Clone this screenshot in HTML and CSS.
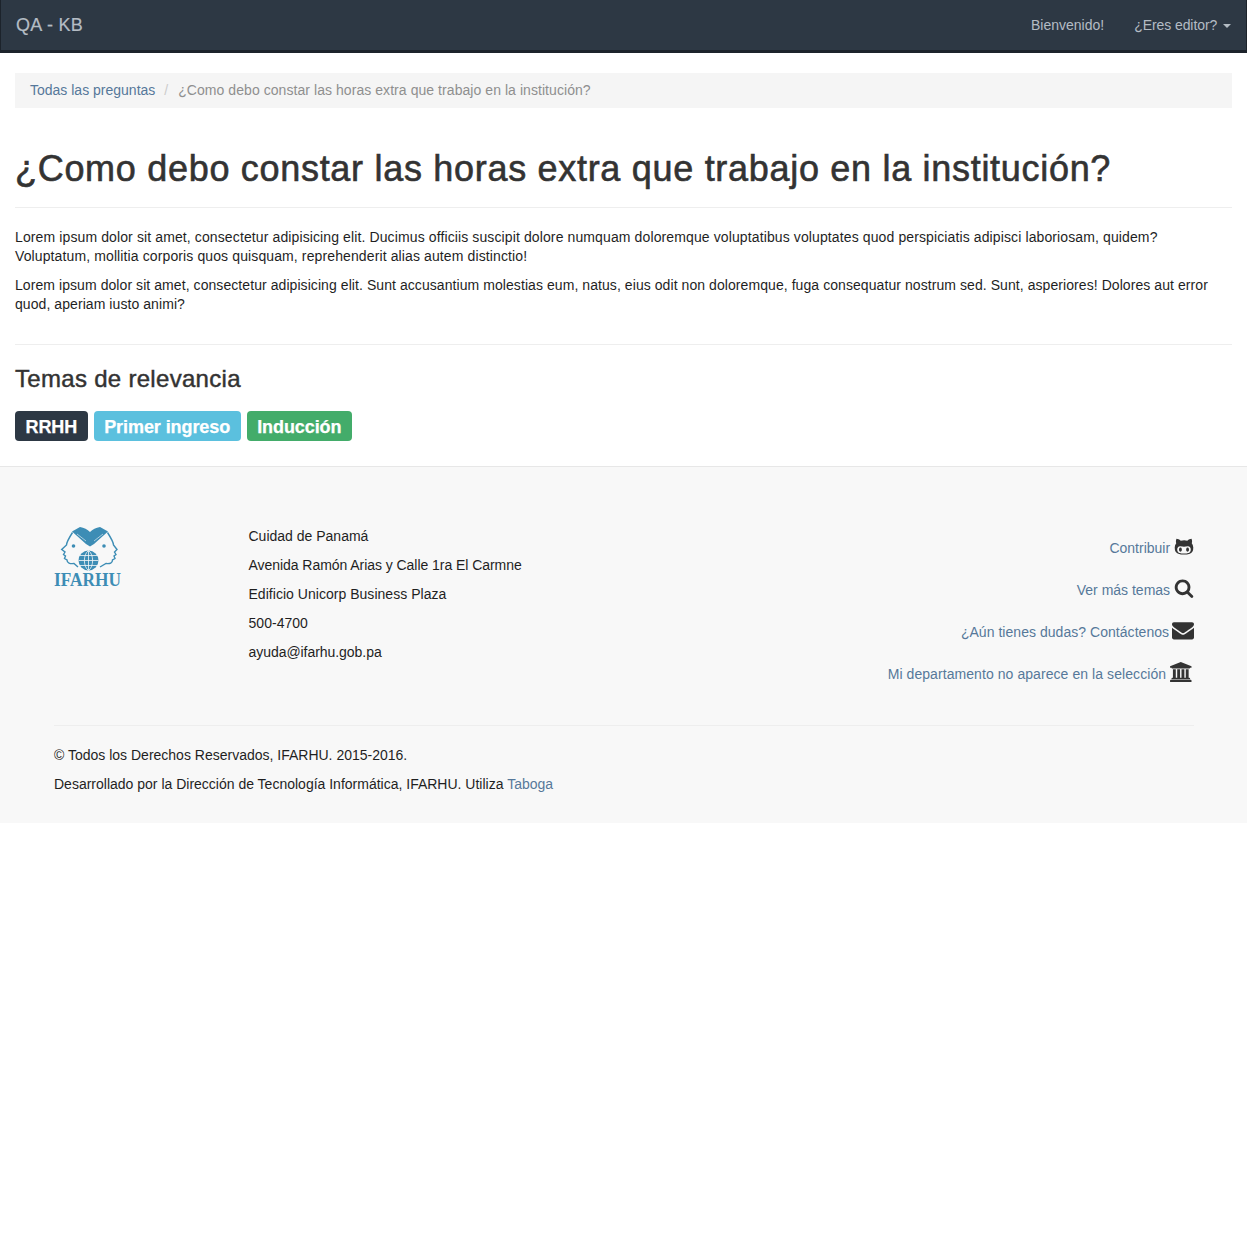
FILE: index.html
```html
<!DOCTYPE html>
<html lang="es">
<head>
<meta charset="utf-8">
<title>QA - KB</title>
<link rel="stylesheet" href="styles.css">
</head>
<body>
<nav class="navbar">
  <a class="brand">QA - KB</a>
  <div class="nav-links">
    <a>Bienvenido!</a>
    <a class="editor">¿Eres editor? <span class="caret"></span></a>
  </div>
</nav>
<main class="content">
  <ol class="breadcrumb">
    <li><a>Todas las preguntas</a></li>
    <li class="sep">/</li>
    <li class="active">¿Como debo constar las horas extra que trabajo en la institución?</li>
  </ol>
  <h1 class="title">¿Como debo constar las horas extra que trabajo en la institución?</h1>
  <p class="para-a">Lorem ipsum dolor sit amet, consectetur adipisicing elit. Ducimus officiis suscipit dolore numquam doloremque voluptatibus voluptates quod perspiciatis adipisci laboriosam, quidem? Voluptatum, mollitia corporis quos quisquam, reprehenderit alias autem distinctio!</p>
  <p class="para-b">Lorem ipsum dolor sit amet, consectetur adipisicing elit. Sunt accusantium molestias eum, natus, eius odit non doloremque, fuga consequatur nostrum sed. Sunt, asperiores! Dolores aut error quod, aperiam iusto animi?</p>
  <hr class="rule">
  <h3 class="topics">Temas de relevancia</h3>
  <div class="labels">
    <span class="label dark">RRHH</span>
    <span class="label info">Primer ingreso</span>
    <span class="label success">Inducción</span>
  </div>
</main>
<footer class="footer">
  <div class="footer-top">
    <div class="logo">
      <svg viewBox="0 0 70 68" width="70" height="68" class="logo-svg">
        <path class="logo-fill" d="M19 5.500 L27 1 C31 1.500 34.500 3.500 37 6 C39.500 3.500 43 1.500 47 1 L55 5.500 L41 18 L37 20.500 L33 18 Z"/>
        <path class="logo-light" d="M24 8 L33 15 M50 8 L41 15"/>
        <path class="logo-line" d="M19.500 6.500 C16 12 13.500 17 13.500 19 L8.700 23.500 L12 26 L10.500 28.500 L12.500 30 L11.500 32.500 L14 34 C14 37 17 38 21 37.500 L25 41"/>
        <path class="logo-line" d="M54.500 6.500 C58 12 60.500 17 60.500 19 L64 23.500 L61.500 26 L63 28.500 L61 30 L62 32.500 L59.500 34 C59.500 37 57 38 53 37.500 L47 41"/>
        <circle class="logo-fill" cx="20.500" cy="20" r="1.800"/>
        <circle class="logo-fill" cx="51" cy="20" r="1.800"/>
        <circle class="logo-fill" cx="35.500" cy="34.500" r="10"/>
        <path class="logo-grid" d="M25.500 34.500 H45.500 M27 29.500 H44 M27 39.500 H44 M35.500 24.500 V44.500 M35.500 24.500 C30 28.500 30 40.500 35.500 44.500 M35.500 24.500 C41 28.500 41 40.500 35.500 44.500"/>
        <text class="logo-text" x="1" y="53" transform="scale(1 1.130)">IFARHU</text>
      </svg>
    </div>
    <div class="address">
      <p>Cuidad de Panamá</p>
      <p class="tight">Avenida Ramón Arias y Calle 1ra El Carmne</p>
      <p class="loose">Edificio Unicorp Business Plaza</p>
      <p class="loose">500-4700</p>
      <p class="tight">ayuda@ifarhu.gob.pa</p>
    </div>
    <div class="links">
      <p><a>Contribuir</a> <svg class="icon" viewBox="0 0 1792 1792"><path d="M704 1216q0 40-12.500 82t-43 76-72.500 34-72.500-34-43-76-12.500-82 12.500-82 43-76 72.500-34 72.500 34 43 76 12.500 82zm640 0q0 40-12.500 82t-43 76-72.500 34-72.500-34-43-76-12.500-82 12.500-82 43-76 72.500-34 72.500 34 43 76 12.500 82zm160 0q0-120-69-204t-187-84q-41 0-195 21-71 11-157 11t-157-11q-152-21-195-21-118 0-187 84t-69 204q0 88 32 153.500t81 103 122 60 140 29.500 149 7h168q82 0 149-7t140-29.500 122-60 81-103 32-153.500zm224-176q0 207-61 331-38 77-105.500 133t-141 86-170 47.500-171.500 22-167 4.500q-78 0-142-3t-147.500-12.500-152.500-30-137-51.500-121-81-86-115q-62-123-62-331 0-237 136-396-27-82-27-170 0-116 51-218 108 0 190 39.500t189 123.500q147-35 309-35 148 0 280 32 105-82 187-121t189-39q51 102 51 218 0 87-27 168 136 160 136 398z"/></svg></p>
      <p><a>Ver más temas</a> <svg class="icon" viewBox="0 0 1792 1792"><path d="M1216 832q0-185-131.500-316.500t-316.500-131.500-316.500 131.500-131.500 316.500 131.500 316.500 316.500 131.500 316.500-131.500 131.500-316.500zm512 832q0 52-38 90t-90 38q-54 0-90-38l-343-342q-179 124-399 124-143 0-273.500-55.500t-225-150-150-225-55.500-273.500 55.500-273.500 150-225 225-150 273.500-55.500 273.500 55.500 225 150 150 225 55.500 273.500q0 220-124 399l343 343q37 37 37 90z"/></svg></p>
      <p><a class="spread">¿Aún tienes dudas? Contáctenos</a> <svg class="icon icon-mail" viewBox="0 0 1792 1792"><path d="M1792 710v794q0 66-47 113t-113 47h-1472q-66 0-113-47t-47-113v-794q44 49 101 87 362 246 497 345 57 42 92.500 65.500t94.500 48 110 24.500h2q51 0 110-24.500t94.500-48 92.500-65.500q170-123 498-345 57-39 100-87zm0-294q0 79-49 151t-122 123q-376 261-468 325-10 7-42.500 30.500t-54 38-52 32.500-57.500 27-50 9h-2q-23 0-50-9t-57.500-27-52-32.500-54-38-42.500-30.500q-91-64-262-182.500t-205-142.500q-62-42-117-115.500t-55-136.500q0-78 41.500-130t118.500-52h1472q65 0 112.500 47t47.500 113z"/></svg></p>
      <p><a class="spread-more">Mi departamento no aparece en la selección</a> <svg class="icon icon-wide" viewBox="0 0 2048 1792"><path d="M960 0l960 384v128h-128q0 26-20.500 45t-48.500 19h-1526q-28 0-48.500-19t-20.500-45h-128v-128zm-704 640h256v768h128v-768h256v768h128v-768h256v768h128v-768h256v768h59q28 0 48.500 19t20.500 45v64h-1664v-64q0-26 20.500-45t48.500-19h59v-768zm1595 960q28 0 48.500 19t20.500 45v128h-1920v-128q0-26 20.500-45t48.500-19h1782z"/></svg></p>
    </div>
  </div>
  <hr class="footer-rule">
  <p>© Todos los Derechos Reservados, IFARHU. 2015-2016.</p>
  <p>Desarrollado por la Dirección de Tecnología Informática, IFARHU. Utiliza <a>Taboga</a></p>
</footer>
</body>
</html>
```
FILE: styles.css
```css
* { box-sizing: border-box; }
html, body { margin: 0; padding: 0; }
body {
  font-family: "Liberation Sans", Arial, sans-serif;
  font-size: 14px;
  line-height: 19px;
  color: #1f1f1f;
  background: #fff;
}
a { color: #56789a; text-decoration: none; }
p { margin: 0 0 10px; }
.para-a { letter-spacing: 0.115px; }
.para-b { letter-spacing: 0.07px; }

.navbar {
  height: 53px;
  background: #2d3844;
  border-left: 1px solid #1c232b;
  border-right: 1px solid #1c232b;
  border-bottom: 3px solid #1c232b;
  display: flex;
  justify-content: space-between;
  align-items: center;
  padding: 0 14px 0 15px;
}
.brand { color: #b4bcc4; font-size: 18px; letter-spacing: 0.3px; -webkit-text-stroke: 0.2px #b4bcc4; }
.nav-links { display: flex; gap: 30px; padding-right: 1px; }
.nav-links a { color: #b4bcc4; }
.nav-links .editor { letter-spacing: -0.08px; }
.caret {
  display: inline-block;
  width: 0;
  height: 0;
  margin-left: 2px;
  vertical-align: middle;
  border-top: 4px solid #b4bcc4;
  border-left: 4px solid transparent;
  border-right: 4px solid transparent;
}

.content { padding: 20px 15px 0; }
.breadcrumb {
  display: flex;
  gap: 9px;
  list-style: none;
  margin: 0 0 41px;
  padding: 8px 15px;
  background: #f5f5f5;
}
.sep { color: #ccc; margin-right: 1px; }
.active { color: #8f8f8f; letter-spacing: 0.06px; }
.title {
  margin: 0 0 20px;
  padding-bottom: 18px;
  border-bottom: 1px solid #eee;
  font-size: 36px;
  font-weight: 400;
  line-height: 40px;
  color: #333;
  letter-spacing: 0.7px;
  -webkit-text-stroke: 0.6px #333;
}
.rule { border: 0; border-top: 1px solid #eee; margin: 30px 0 21px; }
.topics {
  margin: 0 0 19px;
  font-size: 24px;
  font-weight: 400;
  line-height: 26px;
  color: #333;
  letter-spacing: 0.3px;
  -webkit-text-stroke: 0.45px #333;
}
.labels { display: flex; gap: 6px; padding-bottom: 25px; }
.label {
  height: 30px;
  padding: 1px 10.500px 0;
  border-radius: 4px;
  color: #fff;
  font-size: 18px;
  font-weight: 700;
  line-height: 30px;
  letter-spacing: -0.08px;
  -webkit-text-stroke: 0.25px #fff;
}
.dark { background: #2d3844; }
.info { background: #5bc0de; }
.success { background: #43ac6a; }

.footer {
  height: 357px;
  padding: 60px 53px 0 54px;
  background: #f8f8f8;
  border-top: 1px solid #e7e7e7;
}
.footer-top { display: flex; height: 198px; }
.logo { width: 194.500px; height: 60px; }
.logo-svg { display: block; margin: -1px 0 0 -1px; }
.logo-fill { fill: #3d8db5; }
.logo-light { fill: none; stroke: #f8f8f8; stroke-width: 0.600; }
.logo-line { fill: none; stroke: #3d8db5; stroke-width: 1.400; }
.logo-grid { fill: none; stroke: #f8f8f8; stroke-width: 0.800; }
.logo-text { fill: #3d8db5; font-family: "Liberation Serif", serif; font-weight: 700; font-size: 17.300px; }
.address { flex: 1; }
.tight { letter-spacing: -0.05px; }
.loose { letter-spacing: 0.03px; }
.links { text-align: right; padding-top: 9px; }
.links p { margin: 0 0 21px; height: 21px; white-space: nowrap; }
.spread { letter-spacing: 0.04px; }
.spread-more { letter-spacing: 0.07px; }
.icon { width: 20px; height: 20px; vertical-align: -3px; fill: #333; }
.icon-mail { width: 22px; height: 22px; margin: -1px 0 -1px -1px; }
.icon-wide { width: 23px; margin-right: 1px; }
.footer-rule { border: 0; border-top: 1px solid #eee; margin: 0 0 20px; }
```
